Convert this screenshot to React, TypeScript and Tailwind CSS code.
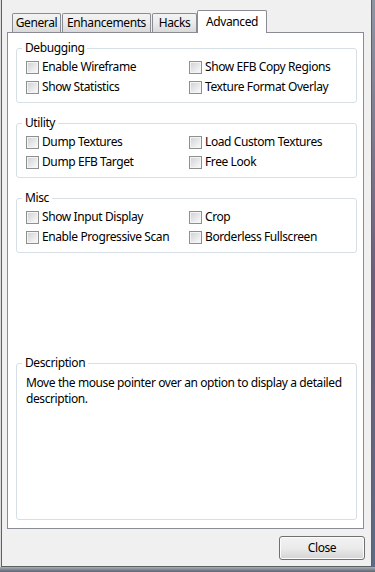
const font = "font-['Noto_Sans',sans-serif] text-[12px] tracking-[-0.4px] text-black"

const Checkbox = () => (
  <span className="w-[13px] h-[13px] shrink-0 border border-[#8e8f8f] bg-[#f4f4f4] p-[1px]">
    <span className="block w-full h-full bg-linear-to-br from-[#d2d4d7] to-[#f8f8f8]" />
  </span>
)

const Option = ({ label }: { label: string }) => (
  <label className="h-[20px] flex items-center gap-[3px] whitespace-nowrap">
    <Checkbox />
    <span className="leading-[16px]">{label}</span>
  </label>
)

const Group = ({ title, options, first }: { title: string; options: string[][]; first?: boolean }) => (
  <fieldset
    className={`ml-[8px] w-[341px] border border-[#d5dfe5] rounded-[3px] px-[5px] pt-[1px] pb-[5px] ${
      first ? "mt-[7px]" : "mt-[12px]"
    }`}
  >
    <legend className="px-[3px] leading-[16px]">{title}</legend>
    <div className="grid grid-cols-[163px_1fr] pl-[4px]">
      {options.map(([left, right]) => (
        <div key={left} className="contents">
          <Option label={left} />
          <Option label={right} />
        </div>
      ))}
    </div>
  </fieldset>
)

const Tab = ({ label, width, active }: { label: string; width: string; active?: boolean }) =>
  active ? (
    <div
      className={`${width} h-[23px] flex items-start justify-center pt-[3px] bg-white border-x border-t border-[#898c95] rounded-t-[2px] leading-[16px]`}
    >
      {label}
    </div>
  ) : (
    <div
      className={`${width} h-[19px] mb-[1px] ml-[1px] flex items-center justify-center bg-linear-to-b from-[#f3f3f3] via-[#ebebeb] to-[#d9d9d9] border-x border-t border-[#898c95] rounded-t-[2px] leading-[16px]`}
    >
      {label}
    </div>
  )

export default function App() {
  return (
    <div className={`w-[375px] h-[572px] flex flex-col bg-[#f0f0f0] ${font}`}>
      <div className="h-[567px] flex">
        <div className="w-[1px] bg-[#dcdcdc]" />
        <div className="flex-1 flex flex-col border-x border-b border-[#5f6063] bg-[#f0f0f0]">
          {/* tabs */}
          <div className="mt-[10px] h-[23px] -mb-[1px] relative z-10 flex items-end pl-[9px]">
            <Tab label="General" width="w-[49px]" />
            <Tab label="Enhancements" width="w-[89px]" />
            <Tab label="Hacks" width="w-[45px]" />
            <Tab label="Advanced" width="w-[70px]" active />
          </div>

          {/* panel */}
          <div className="ml-[5px] w-[357px] h-[497px] border border-[#898c95] bg-white flex flex-col">
            <Group
              first
              title="Debugging"
              options={[
                ["Enable Wireframe", "Show EFB Copy Regions"],
                ["Show Statistics", "Texture Format Overlay"],
              ]}
            />
            <Group
              title="Utility"
              options={[
                ["Dump Textures", "Load Custom Textures"],
                ["Dump EFB Target", "Free Look"],
              ]}
            />
            <Group
              title="Misc"
              options={[
                ["Show Input Display", "Crop"],
                ["Enable Progressive Scan", "Borderless Fullscreen"],
              ]}
            />

            <fieldset className="mt-auto mb-[8px] ml-[8px] w-[341px] h-[165px] border border-[#d5dfe5] rounded-[3px] px-[5px] pt-[4px]">
              <legend className="px-[3px] leading-[16px]">Description</legend>
              <p className="pl-[4px] leading-[16px]">
                Move the mouse pointer over an option to display a detailed
                <br />
                description.
              </p>
            </fieldset>
          </div>

          {/* footer */}
          <div className="mt-[7px] flex justify-end pr-[6px]">
            <button className="w-[86px] h-[24px] rounded-[3px] border border-[#707070] bg-linear-to-b from-[#f2f2f2] via-[#ebebeb] to-[#d4d4d4] shadow-[inset_0_0_0_1px_#fcfcfc] leading-[16px]">
              Close
            </button>
          </div>
        </div>
        <div className="w-[3px] bg-linear-to-b from-[#8d96a3] via-[#6d5c7a] to-[#5b6b86]" />
      </div>
      <div className="h-[5px] bg-linear-to-b from-[#a7afb8] to-[#5d6670]" />
    </div>
  )
}
